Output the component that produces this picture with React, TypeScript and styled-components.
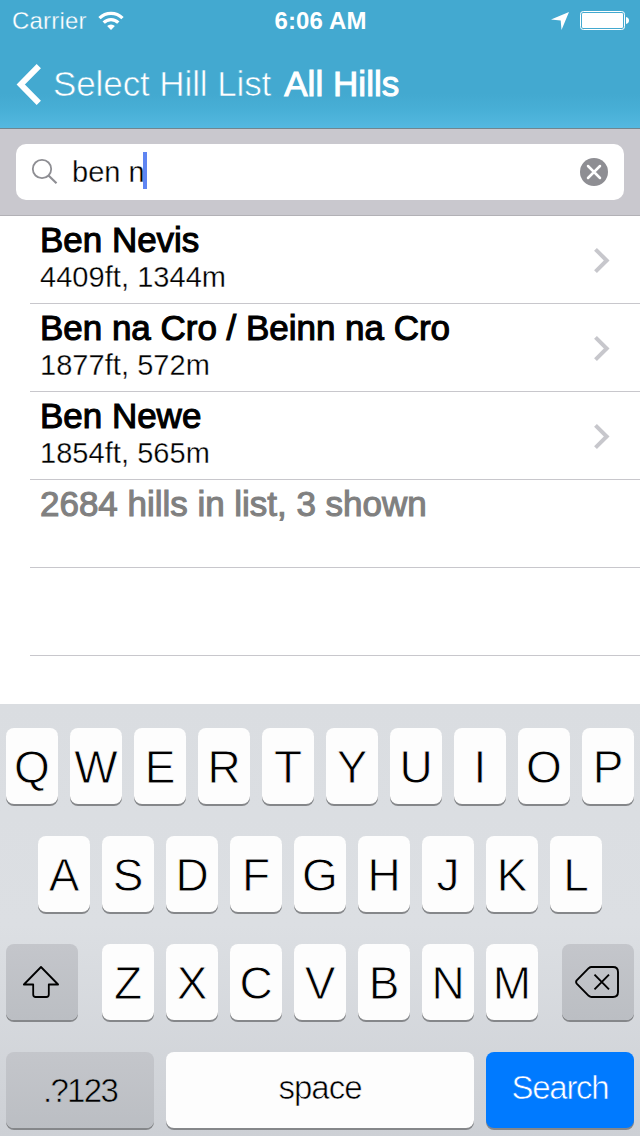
import React from "react";
import styled, { createGlobalStyle } from "styled-components";

const GlobalStyle = createGlobalStyle`
  * { box-sizing: border-box; }
  body { margin: 0; background: #fff; }
`;

const Screen = styled.div`
  width: 640px;
  height: 1136px;
  display: flex;
  flex-direction: column;
  overflow: hidden;
  background: #fff;
  color: #000;
  font-family: "Liberation Sans", Arial, sans-serif;
  white-space: nowrap;
`;

const Header = styled.header`
  height: 129px;
  border-bottom: 1px solid #70858f;
  background: linear-gradient(#43a9d0 0, #43a9d0 94px, #48afd6 110px, #54b8e0 128px);
  color: #fff;
`;

const StatusBar = styled.div`
  height: 40px;
  padding: 0 11px 0 12px;
  display: grid;
  grid-template-columns: 1fr auto 1fr;
  align-items: center;
  font-size: 24px;
  line-height: 42px;
`;

const StatusGroup = styled.div<{ $end?: boolean }>`
  display: flex;
  align-items: center;
  justify-content: ${(p) => (p.$end ? "flex-end" : "flex-start")};
  gap: 11px;
`;

const Carrier = styled.span`
  width: 75px;
  letter-spacing: 0.2px;
  -webkit-text-stroke: 0.3px #43a9d0;
`;

const Clock = styled.span`
  font-weight: 700;
  letter-spacing: 0.15px;
`;

const NavBar = styled.nav`
  height: 88px;
  padding-left: 16px;
  display: flex;
  align-items: center;
  font-size: 35px;
  line-height: 88px;
`;

const BackLabel = styled.span`
  margin-left: 11px;
  letter-spacing: -0.1px;
  -webkit-text-stroke: 0.6px #43a9d0;
`;

const NavTitle = styled.span`
  margin-left: 13px;
  letter-spacing: 0.05px;
  -webkit-text-stroke: 1px #fff;
`;

const SearchBar = styled.div`
  height: 87px;
  padding: 15px 16px;
  background: #c9c8ce;
  border-bottom: 1px solid #b2b1b6;
`;

const SearchField = styled.div`
  height: 56px;
  padding: 0 16px 0 15px;
  display: flex;
  align-items: center;
  border-radius: 10px;
  background: #fff;
  font-size: 29px;
`;

const Query = styled.span`
  margin-left: 13px;
  line-height: 56px;
  -webkit-text-stroke: 0.3px #fff;
`;

const Caret = styled.span`
  width: 4px;
  height: 37px;
  margin: 0 auto 3px -1.5px;
  background: #5f85f2;
`;

const List = styled.ul`
  height: 488px;
  margin: 0;
  padding: 0 0 0 30px;
  list-style: none;
`;

const Row = styled.li`
  height: 88px;
  padding: 4px 29px 0 10px;
  display: flex;
  justify-content: space-between;
  border-bottom: 1px solid #c8c7cc;
`;

const Name = styled.div<{ $muted?: boolean }>`
  font-size: 35px;
  line-height: 40px;
  letter-spacing: -0.02px;
  color: ${(p) => (p.$muted ? "#808080" : "#000")};
  -webkit-text-stroke: 1.1px ${(p) => (p.$muted ? "#808080" : "#000")};
`;

const Height = styled.div`
  font-size: 29px;
  line-height: 35px;
  letter-spacing: 0.05px;
  -webkit-text-stroke: 0.3px #fff;
`;

const Disclosure = styled.svg`
  margin-top: 27px;
`;

const Keyboard = styled.div`
  flex: 1;
  padding: 24px 6px 0;
  display: flex;
  flex-direction: column;
  gap: 32px;
  background: linear-gradient(#dadde1 0, #dcdfe3 220px, #cdd0d5 432px);
`;

const KeyRow = styled.div<{ $spread?: boolean }>`
  display: flex;
  justify-content: ${(p) => (p.$spread ? "space-between" : "center")};
  gap: 12px;
`;

const faces = {
  letter: { bg: "#fdfdfd", edge: "#fdfdfd", fg: "#000" },
  system: { bg: "linear-gradient(#c4c6cb, #bbbec3)", edge: "#bdc0c5", fg: "#000" },
  action: { bg: "#007aff", edge: "#007aff", fg: "#fff" },
};

const Key = styled.div<{ $w?: number; $face?: keyof typeof faces }>`
  width: ${(p) => p.$w ?? 52}px;
  height: 76px;
  display: flex;
  align-items: center;
  justify-content: center;
  border-radius: 8px;
  background: ${(p) => faces[p.$face ?? "letter"].bg};
  box-shadow: 0 2px 0 #85878a;
  color: ${(p) => faces[p.$face ?? "letter"].fg};
  font-size: 46px;
  line-height: 76px;
  -webkit-text-stroke: 0.8px ${(p) => faces[p.$face ?? "letter"].edge};
`;

const LetterKey = styled(Key)`
  padding-top: 1px;
`;

const WordKey = styled(Key)<{ $tracking: number }>`
  padding-bottom: ${(p) => (p.$face === "system" ? 0 : 5)}px;
  padding-top: ${(p) => (p.$face === "system" ? 1 : 0)}px;
  font-size: 33px;
  letter-spacing: ${(p) => p.$tracking}px;
  -webkit-text-stroke-width: 0.6px;
`;

const Letters = styled.div`
  display: flex;
  gap: 12px;
`;

const hills = [
  { name: "Ben Nevis", height: "4409ft, 1344m" },
  { name: "Ben na Cro / Beinn na Cro", height: "1877ft, 572m" },
  { name: "Ben Newe", height: "1854ft, 565m" },
];

const WifiIcon = () => (
  <svg width="26" height="20" viewBox="0 0 26 20" fill="none" stroke="#fff" strokeWidth="3.3">
    <path d="M1.5 7.2a16.2 16.2 0 0 1 23 0" />
    <path d="M5.7 11.6a10.3 10.3 0 0 1 14.6 0" />
    <path d="M13 19l-3.9-4a5.5 5.5 0 0 1 7.8 0z" fill="#fff" stroke="none" />
  </svg>
);

const LocationIcon = () => (
  <svg width="18" height="18" viewBox="0 0 18 18">
    <path d="M18 0L10.5 18L9.7 8.4L0 7.6z" fill="#fff" />
  </svg>
);

const BatteryIcon = () => (
  <svg width="49" height="20" viewBox="0 0 49 20">
    <rect x="0.5" y="0.5" width="44" height="18" rx="2.8" fill="none" stroke="#fff" />
    <rect x="2" y="2" width="41" height="15" rx="1.2" fill="#fff" />
    <path d="M46 6q3 .6 3 3.5t-3 3.5z" fill="#fff" />
  </svg>
);

const BackIcon = () => (
  <svg width="26" height="42" viewBox="0 0 26 42">
    <path d="M22.8 3.2L4.8 21.5L22.8 39.8" fill="none" stroke="#fff" strokeWidth="6" />
  </svg>
);

const SearchIcon = () => (
  <svg width="28" height="28" viewBox="0 0 28 28" fill="none" stroke="#8e8e93">
    <circle cx="11" cy="11" r="9.2" strokeWidth="1.8" />
    <path d="M17.5 17.5L25.5 25.3" strokeWidth="2.2" />
  </svg>
);

const ClearIcon = () => (
  <svg width="28" height="28" viewBox="0 0 28 28">
    <circle cx="14" cy="14" r="14" fill="#8e8e93" />
    <path d="M8 8L20 20M20 8L8 20" stroke="#fff" strokeWidth="2.5" strokeLinecap="round" />
  </svg>
);

const ChevronIcon = () => (
  <Disclosure width="18" height="28" viewBox="0 0 18 28">
    <path d="M2.5 2.3L13.7 13.5L2.5 24.7" fill="none" stroke="#c7c7cc" strokeWidth="4" />
  </Disclosure>
);

const ShiftIcon = () => (
  <svg width="38" height="34" viewBox="0 0 38 34" fill="none" stroke="#000" strokeWidth="1.8" strokeLinejoin="round">
    <path d="M18 2L0.9 19.5H10.2V29.5Q10.2 32 12.7 32H23.3Q25.8 32 25.8 29.5V19.5H35.1z" />
  </svg>
);

const DeleteIcon = () => (
  <svg width="46" height="34" viewBox="0 0 46 34" fill="none" stroke="#000" strokeWidth="1.9" strokeLinejoin="round">
    <path d="M16.5 2H38Q43 2 43 7V27Q43 32 38 32H16.5Q15.1 32 13.7 30.8L1.7 18.6Q0.5 17 1.7 15.4L13.7 3.2Q15.1 2 16.5 2z" />
    <path d="M19.5 9.6L34 24.4M34 9.6L19.5 24.4" />
  </svg>
);

const letterKeys = (letters: string) => letters.split("").map((c) => <LetterKey key={c}>{c}</LetterKey>);

export default function App() {
  return (
    <Screen>
      <GlobalStyle />
      <Header>
        <StatusBar>
          <StatusGroup>
            <Carrier>Carrier</Carrier>
            <WifiIcon />
          </StatusGroup>
          <Clock>6:06 AM</Clock>
          <StatusGroup $end>
            <LocationIcon />
            <BatteryIcon />
          </StatusGroup>
        </StatusBar>
        <NavBar>
          <BackIcon />
          <BackLabel>Select Hill List</BackLabel>
          <NavTitle>All Hills</NavTitle>
        </NavBar>
      </Header>
      <SearchBar>
        <SearchField>
          <SearchIcon />
          <Query>ben n</Query>
          <Caret />
          <ClearIcon />
        </SearchField>
      </SearchBar>
      <List>
        {hills.map((hill) => (
          <Row key={hill.name}>
            <div>
              <Name>{hill.name}</Name>
              <Height>{hill.height}</Height>
            </div>
            <ChevronIcon />
          </Row>
        ))}
        <Row>
          <Name $muted>2684 hills in list, 3 shown</Name>
        </Row>
        <Row />
      </List>
      <Keyboard>
        <KeyRow>{letterKeys("QWERTYUIOP")}</KeyRow>
        <KeyRow>{letterKeys("ASDFGHJKL")}</KeyRow>
        <KeyRow $spread>
          <Key $w={72} $face="system"><ShiftIcon /></Key>
          <Letters>{letterKeys("ZXCVBNM")}</Letters>
          <Key $w={72} $face="system"><DeleteIcon /></Key>
        </KeyRow>
        <KeyRow>
          <WordKey $w={148} $face="system" $tracking={-1.7}>.?123</WordKey>
          <WordKey $w={308} $tracking={-1}>space</WordKey>
          <WordKey $w={148} $face="action" $tracking={-1.3}>Search</WordKey>
        </KeyRow>
      </Keyboard>
    </Screen>
  );
}
